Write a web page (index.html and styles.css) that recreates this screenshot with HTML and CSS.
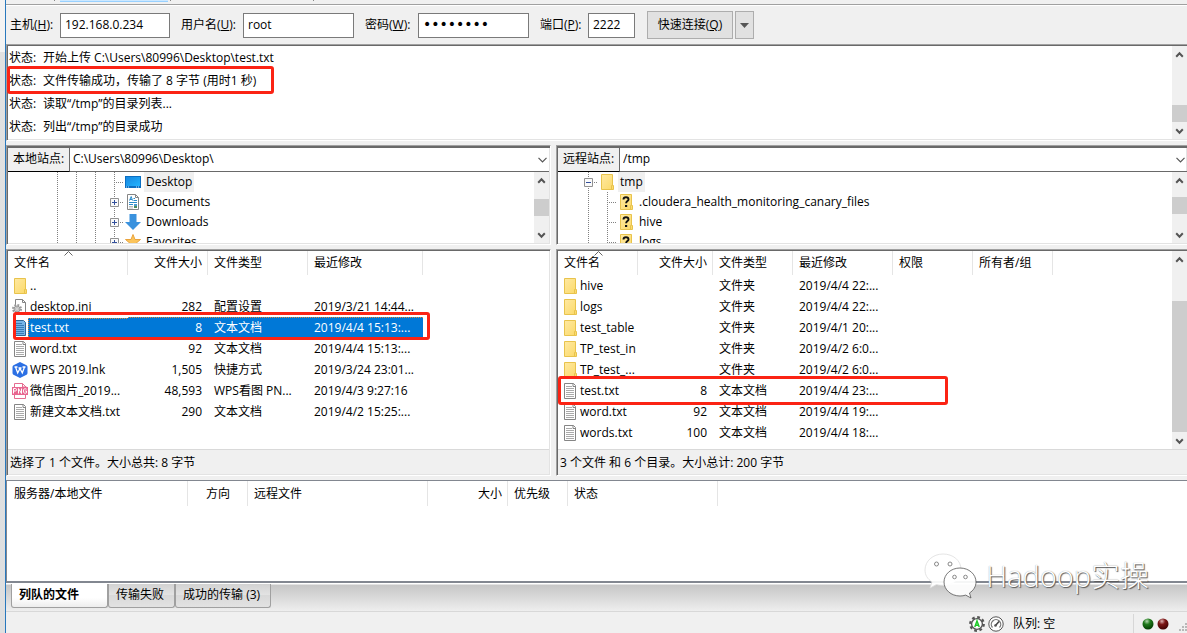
FILE: index.html
```html
<!DOCTYPE html>
<html lang="zh-CN">
<head>
<meta charset="utf-8">
<title>FTP</title>
<link rel="stylesheet" href="styles.css">
</head>
<body>
<svg class="sprite" aria-hidden="true">
  <defs>
    <linearGradient id="gold" x1="0" y1="0" x2="1" y2="1"><stop offset="0" stop-color="#ffe9a2"/><stop offset="1" stop-color="#fbd968"/></linearGradient>
    <linearGradient id="sky" x1="0" y1="0" x2="1" y2="1"><stop offset="0" stop-color="#1887e0"/><stop offset="1" stop-color="#20b4ff"/></linearGradient>
    <radialGradient id="green" cx=".4" cy=".25" r=".75"><stop offset="0" stop-color="#b5d8b0"/><stop offset=".4" stop-color="#1f7a1b"/><stop offset="1" stop-color="#033d02"/></radialGradient>
    <radialGradient id="maroon" cx=".4" cy=".25" r=".75"><stop offset="0" stop-color="#dcb0b0"/><stop offset=".4" stop-color="#7c1616"/><stop offset="1" stop-color="#400202"/></radialGradient>
  </defs>
  <symbol id="folder" viewBox="0 0 16 16"><path d="M2.5.5h11v11h1v4h-12z" fill="url(#gold)" stroke="#e8c34c"/><path d="M12.5 15v-3.500h1" fill="none" stroke="#e8c34c"/></symbol>
  <symbol id="unknown" viewBox="0 0 16 16"><use href="#folder"/><path d="M5.500 5.500C5.500 3.700 6.600 3.300 8 3.300s2.500.8 2.500 2.100c0 1.700-2.400 1.700-2.400 3.900" fill="none" stroke="#111" stroke-width="1.900"/><path d="M7 11h2.200v2H7z" fill="#111"/></symbol>
  <symbol id="text" viewBox="0 0 16 16"><path d="M2.500.5h9l2 2v13h-11z" fill="#fff" stroke="#858585"/><path d="M11 .5v3h3" fill="none" stroke="#858585"/><path d="M4 3.500h6M4 5.500h8M4 7.500h8M4 9.500h8M4 11.500h8M4 13.500h8" stroke="#aaa"/></symbol>
  <symbol id="text-on" viewBox="0 0 16 16"><path d="M2.500.5h9l2 2v13h-11z" fill="#76b5e8" stroke="#2f6593"/><path d="M4 3.500h6M4 5.500h8M4 7.500h8M4 9.500h8M4 11.500h8M4 13.500h8" stroke="#3a7db5"/></symbol>
  <symbol id="ini" viewBox="0 0 16 16"><path d="M3.500.5h7l3 3v12h-10z" fill="#fff" stroke="#858585"/><path d="M10.500.5v3h3" fill="none" stroke="#858585"/><circle cx="5" cy="10" r="3.800" fill="none" stroke="#999" stroke-width="2.400" stroke-dasharray="1.700 1.280"/><circle cx="5" cy="10" r="3" fill="#ccc" stroke="#999"/><circle cx="5" cy="10" r="1.200" fill="#fff" stroke="#999" stroke-width=".6"/></symbol>
  <symbol id="wps" viewBox="0 0 16 16"><path d="M8 0l6.500 3.200Q15.500 4 15.500 5v6q0 1-1 1.800L8 16l-6.500-3.200Q.5 12 .5 11V5q0-1 1-1.800z" fill="#2c70e4"/><path d="M2.500 5h3M3.500 5l2.200 6L8 6.500l2.300 4.500 2.200-6M10.500 5h3M6.500 6h3" fill="none" stroke="#fff" stroke-width="1.300"/></symbol>
  <symbol id="png" viewBox="0 0 16 16"><path d="M2.500 4V.5h8l4 4M2.500 12v3.500h11V12M10.500.5v3.500h4" fill="#fff" stroke="#e56c91"/><path d="M0 4h16v8H0z" fill="#e86690"/><path d="M1.500 10.500v-5h1.800q1.200 0 1.200 1.300T3.300 8H1.500M6.500 10.500v-5l3 5v-5M14.500 6.200q-3-1.500-3 1.800t3 1.800V8h-1.300" fill="none" stroke="#fff"/></symbol>
  <symbol id="desktop" viewBox="0 0 16 16"><path d="M0 2h16v12H0z" fill="#0b6fc2"/><path d="M1 3h14v9H1z" fill="url(#sky)"/><path d="M1 13h1M3 13h1M11 13h1M13 13h1" stroke="#bfe4ff"/></symbol>
  <symbol id="documents" viewBox="0 0 16 16"><path d="M2.500.5h8l3 3v12h-11z" fill="#fff" stroke="#858585"/><path d="M10.500.5v3h3" fill="none" stroke="#858585"/><path d="M4.500 6.500l1.700-4 1.300 4M5 5.500h2M8.500 4.500h1.500M8.500 6.500h3.500M4 8.500h8M4 10.500h4" fill="none" stroke="#2b8bc9"/><path d="M4 12.500h4M4 14h4" stroke="#bbb"/><path d="M9 10h3v2H9z" fill="#4a9bd0"/><path d="M9 12h3v2H9z" fill="#4d8a5c"/></symbol>
  <symbol id="download" viewBox="0 0 16 16"><path d="M4.500 0h7v8H16l-8 8-8-8h4.500z" fill="#3a92de"/></symbol>
  <symbol id="star" viewBox="0 0 16 16"><path d="M8 .5l2 5h5.500l-4.400 3.700 1.700 6L8 11.800l-4.800 3.400 1.700-6L.5 5.500H6z" fill="#fbc45b" stroke="#e9a33c"/></symbol>
  <symbol id="plus" viewBox="0 0 9 9"><path d="M.5.5h8v8h-8z" fill="#fafafa" stroke="#919191"/><path d="M2 4.500h5M4.500 2v5" stroke="#33509c"/></symbol>
  <symbol id="minus" viewBox="0 0 9 9"><path d="M.5.5h8v8h-8z" fill="#fafafa" stroke="#919191"/><path d="M2 4.500h5" stroke="#33509c"/></symbol>
  <symbol id="up" viewBox="0 0 15 17"><path d="M4.200 10.700l3.300-3.400 3.300 3.400" fill="none" stroke="#555" stroke-width="2"/></symbol>
  <symbol id="down" viewBox="0 0 15 17"><path d="M4.200 7.300l3.300 3.400 3.300-3.400" fill="none" stroke="#555" stroke-width="2"/></symbol>
  <symbol id="chevron" viewBox="0 0 9 6"><path d="M.5.8l4 4 4-4" fill="none" stroke="#555" stroke-width="1.200"/></symbol>
  <symbol id="sort" viewBox="0 0 9 5"><path d="M.5 4.500l4-4 4 4" fill="none" stroke="#666"/></symbol>
</svg>

<div class="frame">
  <div class="edge"></div>
  <div class="app">
    <div class="toolbar"><i class="sep"></i><i class="hot"></i><i class="sep"></i><i class="sep far"></i></div>
    <form class="quick">
      <label class="l-host" for="host">主机(<u>H</u>):</label><input id="host" class="host" value="192.168.0.234">
      <label class="l-user" for="user">用户名(<u>U</u>):</label><input id="user" value="root">
      <label class="l-pass" for="pass">密码(<u>W</u>):</label><input id="pass" class="pass" type="password" value="password">
      <label class="l-port" for="port">端口(<u>P</u>):</label><input id="port" class="port" value="2222">
      <button type="button" class="connect">快速连接(<u>Q</u>)</button>
      <button type="button" class="drop" aria-label="历史"><svg width="9" height="5"><path d="M0 0h9L4.500 5z" fill="#555"/></svg></button>
    </form>

    <section class="log sunken">
      <div class="log-lines">
        <p><b>状态:</b>开始上传 C:\Users\80996\Desktop\test.txt</p>
        <p class="marked"><b>状态:</b>文件传输成功，传输了 8 字节 (用时1 秒)<i class="mark mark-log"></i></p>
        <p><b>状态:</b>读取“/tmp”的目录列表...</p>
        <p><b>状态:</b>列出“/tmp”的目录成功</p>
      </div>
      <div class="scroll"><svg><use href="#up"/></svg><div class="track end"><i class="thumb"></i></div><svg><use href="#down"/></svg></div>
    </section>

    <main class="sites">
      <div class="site">
        <section class="sunken nav">
          <div class="address"><label for="local">本地站点:</label><div class="combo"><select id="local"><option>C:\Users\80996\Desktop\</option></select><svg class="chev"><use href="#chevron"/></svg></div></div>
          <div class="treebox">
            <ul class="tree local">
              <li><i class="guide"></i><i class="guide"></i><i class="guide"></i><i class="guide node"></i><svg class="icon"><use href="#desktop"/></svg><span class="current">Desktop</span></li>
              <li><i class="guide"></i><i class="guide"></i><i class="guide"></i><i class="guide node"><svg><use href="#plus"/></svg></i><svg class="icon"><use href="#documents"/></svg><span>Documents</span></li>
              <li><i class="guide"></i><i class="guide"></i><i class="guide"></i><i class="guide node"><svg><use href="#plus"/></svg></i><svg class="icon"><use href="#download"/></svg><span>Downloads</span></li>
              <li><i class="guide"></i><i class="guide"></i><i class="guide"></i><i class="guide node"><svg><use href="#plus"/></svg></i><svg class="icon"><use href="#star"/></svg><span>Favorites</span></li>
            </ul>
            <div class="scroll"><svg><use href="#up"/></svg><div class="track mid"><i class="thumb"></i></div><svg><use href="#down"/></svg></div>
          </div>
        </section>
        <section class="sunken files">
          <div class="listbox">
            <div class="list">
              <table class="t-local">
                <colgroup><col class="w120"><col class="w80"><col class="w100"><col class="w115"></colgroup>
                <thead><tr><th>文件名<svg class="sort"><use href="#sort"/></svg></th><th class="num">文件大小</th><th>文件类型</th><th>最近修改</th></tr></thead>
                <tbody>
                  <tr><td><div class="name"><svg><use href="#folder"/></svg><span>..</span></div></td><td></td><td></td><td></td></tr>
                  <tr><td><div class="name"><svg><use href="#ini"/></svg><span>desktop.ini</span></div></td><td class="num">282</td><td>配置设置</td><td>2019/3/21 14:44...</td></tr>
                  <tr class="marked selected"><td><div class="name"><svg><use href="#text-on"/></svg><span>test.txt</span></div></td><td class="num">8</td><td>文本文档</td><td>2019/4/4 15:13:...<i class="mark mark-local"></i></td></tr>
                  <tr><td><div class="name"><svg><use href="#text"/></svg><span>word.txt</span></div></td><td class="num">92</td><td>文本文档</td><td>2019/4/4 15:13:...</td></tr>
                  <tr><td><div class="name"><svg><use href="#wps"/></svg><span>WPS 2019.lnk</span></div></td><td class="num">1,505</td><td>快捷方式</td><td>2019/3/24 23:01...</td></tr>
                  <tr><td><div class="name"><svg><use href="#png"/></svg><span>微信图片_2019...</span></div></td><td class="num">48,593</td><td>WPS看图 PN...</td><td>2019/4/3 9:27:16</td></tr>
                  <tr><td><div class="name"><svg><use href="#text"/></svg><span>新建文本文档.txt</span></div></td><td class="num">290</td><td>文本文档</td><td>2019/4/2 15:25:...</td></tr>
                </tbody>
              </table>
            </div>
          </div>
          <div class="summary">选择了 1 个文件。大小总共: 8 字节</div>
        </section>
      </div>

      <div class="site remote">
        <section class="sunken nav">
          <div class="address"><label for="remote">远程站点:</label><div class="combo"><select id="remote"><option>/tmp</option></select><svg class="chev"><use href="#chevron"/></svg></div></div>
          <div class="treebox">
            <ul class="tree">
              <li><i class="guide node"><svg><use href="#minus"/></svg></i><svg class="icon"><use href="#folder"/></svg><span class="current">tmp</span></li>
              <li><i class="guide"></i><i class="guide node"></i><svg class="icon"><use href="#unknown"/></svg><span>.cloudera_health_monitoring_canary_files</span></li>
              <li><i class="guide"></i><i class="guide node"></i><svg class="icon"><use href="#unknown"/></svg><span>hive</span></li>
              <li><i class="guide"></i><i class="guide node"></i><svg class="icon"><use href="#unknown"/></svg><span>logs</span></li>
            </ul>
            <div class="scroll"><svg><use href="#up"/></svg><div class="track mid"><i class="thumb"></i></div><svg><use href="#down"/></svg></div>
          </div>
        </section>
        <section class="sunken files">
          <div class="listbox">
            <div class="list">
              <table class="t-remote">
                <colgroup><col class="w80"><col class="w75"><col class="w80"><col class="w100"><col class="w80"><col class="w80"></colgroup>
                <thead><tr><th>文件名<svg class="sort"><use href="#sort"/></svg></th><th class="num">文件大小</th><th>文件类型</th><th>最近修改</th><th>权限</th><th>所有者/组</th></tr></thead>
                <tbody>
                  <tr><td><div class="name"><svg><use href="#folder"/></svg><span>hive</span></div></td><td></td><td>文件夹</td><td>2019/4/4 22:...</td><td></td><td></td></tr>
                  <tr><td><div class="name"><svg><use href="#folder"/></svg><span>logs</span></div></td><td></td><td>文件夹</td><td>2019/4/4 22:...</td><td></td><td></td></tr>
                  <tr><td><div class="name"><svg><use href="#folder"/></svg><span>test_table</span></div></td><td></td><td>文件夹</td><td>2019/4/1 20:...</td><td></td><td></td></tr>
                  <tr><td><div class="name"><svg><use href="#folder"/></svg><span>TP_test_in</span></div></td><td></td><td>文件夹</td><td>2019/4/2 6:0...</td><td></td><td></td></tr>
                  <tr><td><div class="name"><svg><use href="#folder"/></svg><span>TP_test_...</span></div></td><td></td><td>文件夹</td><td>2019/4/2 6:0...</td><td></td><td></td></tr>
                  <tr class="marked"><td><div class="name"><svg><use href="#text"/></svg><span>test.txt</span></div></td><td class="num">8</td><td>文本文档</td><td>2019/4/4 23:...<i class="mark mark-remote"></i></td><td></td><td></td></tr>
                  <tr><td><div class="name"><svg><use href="#text"/></svg><span>word.txt</span></div></td><td class="num">92</td><td>文本文档</td><td>2019/4/4 19:...</td><td></td><td></td></tr>
                  <tr><td><div class="name"><svg><use href="#text"/></svg><span>words.txt</span></div></td><td class="num">100</td><td>文本文档</td><td>2019/4/4 18:...</td><td></td><td></td></tr>
                </tbody>
              </table>
            </div>
            <div class="scroll"><svg><use href="#up"/></svg><div class="track end"><i class="thumb long"></i></div><svg><use href="#down"/></svg></div>
          </div>
          <div class="summary">3 个文件 和 6 个目录。大小总计: 200 字节</div>
        </section>
      </div>
    </main>

    <section class="queue">
      <table class="t-queue">
        <colgroup><col class="w180"><col class="w60"><col class="w180"><col class="w80"><col class="w60"><col class="w150"></colgroup>
        <thead><tr><th>服务器/本地文件</th><th class="mid">方向</th><th>远程文件</th><th class="num">大小</th><th>优先级</th><th>状态</th></tr></thead>
      </table>
    </section>
    <nav class="tabs">
      <button type="button" class="active">列队的文件</button><button type="button">传输失败</button><button type="button">成功的传输 (3)</button>
    </nav>
    <footer class="status">
      <svg width="16" height="16" viewBox="0 0 16 16"><circle cx="8" cy="8" r="6.700" fill="none" stroke="#555" stroke-width="2.400" stroke-dasharray="2.700 2.562"/><circle cx="8" cy="8" r="5.400" fill="#fff" stroke="#555" stroke-width="1.400"/><path d="M5.800 11L8 5l2.200 6M6.500 9.300h3" fill="none" stroke="#1ec828" stroke-width="1.500"/></svg>
      <svg class="gauge" width="16" height="16" viewBox="0 0 16 16"><circle cx="8" cy="8" r="7.200" fill="#fff" stroke="#555"/><path d="M4.500 11.500A4.700 4.700 0 1 1 11.500 11.500" fill="none" stroke="#777" stroke-width="1.300"/><path d="M7.500 9.500l3.500-4" stroke="#444" stroke-width="1.500"/><circle cx="7.500" cy="9.500" r="1.300" fill="#555"/></svg>
      <span class="queued">队列: 空</span>
      <div class="leds">
        <svg width="12" height="12" viewBox="0 0 12 12"><circle cx="6" cy="6" r="5.500" fill="url(#green)"/></svg>
        <svg width="12" height="12" viewBox="0 0 12 12"><circle cx="6" cy="6" r="5.500" fill="url(#maroon)"/></svg>
      </div>
      <svg class="grip" width="8" height="11" viewBox="0 0 8 11"><path d="M6 1h2v2H6zM3 4h2v2H3zM6 4h2v2H6zM0 7h2v2H0zM3 7h2v2H3zM6 7h2v2H6z" fill="#b8b8b8"/></svg>
    </footer>
    <div class="watermark">
      <svg width="54" height="46" viewBox="0 0 54 46"><g fill="#fff" fill-opacity=".92" stroke-width=".8"><path d="M19 1C9 1 1 8 1 17c0 5 2.500 9 7 12l-2 6 6.500-3.500c2 .6 4 .9 6.500.9 10 0 18-7 18-16S29 1 19 1z" stroke="#ddd"/><path d="M36 15c-9 0-16 6.300-16 14s7 14 16 14c2 0 4-.3 5.700-.9L47 45l-1.500-5c4-2.600 6.500-6.500 6.500-11 0-7.700-7-14-16-14z" stroke="#555"/></g><g fill="#fff" stroke="#888"><circle cx="12.500" cy="11" r="2"/><circle cx="26" cy="11" r="2"/><circle cx="30.500" cy="24" r="1.800"/><circle cx="41.500" cy="24" r="1.800"/></g></svg>
      <span>Hadoop实操</span>
    </div>
  </div>
</div>
</body>
</html>
```
FILE: styles.css
```css
* { box-sizing: border-box; }
body {
  margin: 0;
  background: #f0f0f0;
  color: #000;
  font: 12px/20px "Open Sans", "Noto Sans CJK SC", sans-serif;
}
input, select, button { font: inherit; color: inherit; border-radius: 0; }
p, ul { margin: 0; padding: 0; list-style: none; }
i, b { font-style: normal; font-weight: 400; }
svg { display: block; flex: none; }
.sprite { position: absolute; width: 0; height: 0; }

.frame { display: flex; min-height: 100vh; overflow: hidden; }
.edge { flex: none; width: 6px; border-right: 1px solid #2878bd; background: linear-gradient(#f3f3f3 52px, #e1e1e1 52px, #dedfe0); }
.app { position: relative; flex: 1; min-width: 0; display: flex; flex-direction: column; }

.toolbar { display: flex; height: 6px; padding-left: 48px; border-bottom: 1px solid #fff; box-shadow: inset 0 -1px #a0a0a0; }
.sep { width: 1px; height: 1px; background: #888; }
.sep.far { margin-left: 142px; }
.hot { width: 108px; height: 2px; margin: 0 2px 0 5px; background: #cce8ff; border-bottom: 1px solid #99d1ff; }

.quick { display: flex; align-items: center; height: 38px; padding: 0 4px; }
.quick label { flex: none; }
.quick input { width: 111px; height: 25px; margin-right: 11px; padding: 0 4px 2px; border: 1px solid #7a7a7a; background: #fff; outline: 0; }
.l-host { width: 50px; }
.l-user { width: 62px; }
.l-pass { width: 53px; }
.l-port { width: 48px; }
.quick .host { width: 110px; }
.quick .pass { font: 14px/20px "DejaVu Sans", sans-serif; }
.quick .port { width: 47px; margin-right: 12px; }
.quick button { height: 28px; padding: 0; border: 1px solid #adadad; background: #e1e1e1; }
.quick .connect { width: 86px; }
.quick .drop { display: flex; align-items: center; justify-content: center; width: 19px; margin-left: 2px; }

.sunken { border: 1px solid; border-color: #a0a0a0 #fff #fff #a0a0a0; box-shadow: inset 1px 1px #696969, inset -1px -1px #e3e3e3; padding: 1px; }
.log { display: flex; height: 97px; border-right: 0; padding-right: 0; background: #fff; }
.log-lines { flex: 1; padding-left: 1px; }
.log p { display: flex; height: 23px; align-items: center; white-space: pre; }
.log b { width: 34px; }

.scroll { flex: none; display: flex; flex-direction: column; width: 15px; background: #f0f0f0; }
.scroll svg { width: 15px; height: 17px; }
.track { flex: 1; display: flex; flex-direction: column; }
.track.end { justify-content: flex-end; }
.track.mid { justify-content: center; }
.remote .track.mid { padding-bottom: 4px; }
.thumb { height: 17px; background: #cdcdcd; }
.thumb.long { height: 80%; }

.sites { flex: 1; display: grid; grid-template-columns: 545fr 631fr; gap: 5px; padding-top: 4px; }
.site { display: flex; flex-direction: column; gap: 4px; min-width: 0; }
.remote .sunken { border-right: 0; padding-right: 0; }
.nav { padding-top: 2px; box-shadow: inset 1px 2px #696969, inset -1px -1px #e3e3e3; background: #fff; }
.address { display: flex; height: 24px; }
.address label { flex: none; width: 62px; padding-left: 5px; background: #f0f0f0; border-right: 1px solid #696969; border-bottom: 1px solid #000; line-height: 22px; }
.combo { flex: 1; display: flex; align-items: center; border-bottom: 1px solid #696969; padding-right: 2px; }
.combo select { flex: 1; min-width: 0; height: 22px; padding: 0 3px 1px; border: 0; background: transparent; appearance: none; outline: 0; }
.chev { width: 9px; height: 6px; }

.treebox { display: flex; height: 71px; }
.tree { flex: 1; overflow: hidden; padding-left: 21px; }
.tree.local { padding-left: 40px; }
.tree li { display: flex; align-items: center; height: 20px; }
.guide { display: flex; align-items: center; justify-content: center; width: 19px; height: 20px; background: repeating-linear-gradient(#808080 0 1px, transparent 1px 2px) 9px 0 / 1px 20px no-repeat; }
.node { background: repeating-linear-gradient(#808080 0 1px, transparent 1px 2px) 9px 0 / 1px 20px no-repeat, repeating-linear-gradient(90deg, #808080 0 1px, transparent 1px 2px) 9px 10px / 10px 1px no-repeat; }
.guide svg { width: 9px; height: 9px; }
.tree .icon { width: 16px; height: 16px; margin: 0 3px 0 1px; }
.tree span { padding: 0 2px; white-space: nowrap; }
.tree .current { background: #f0f0f0; }

.files { flex: 1; display: flex; flex-direction: column; }
.listbox { flex: 1; display: flex; min-height: 198px; background: #fff; }
.list { flex: 1; min-width: 0; }
table { table-layout: fixed; border-collapse: collapse; width: 0; }
th, td { height: 21px; padding: 0 0 0 6px; font-weight: 400; text-align: left; white-space: nowrap; line-height: 20px; }
th { height: 24px; background: linear-gradient(#e5e5e5, #e5e5e5) right / 1px 100% no-repeat; }
.num { text-align: right; padding: 0 6px 0 0; }
th.mid { text-align: center; padding: 0; }
.w60 { width: 60px; } .w75 { width: 75px; } .w80 { width: 80px; } .w100 { width: 100px; }
.w115 { width: 115px; } .w120 { width: 120px; } .w150 { width: 150px; } .w180 { width: 180px; }
thead tr { position: relative; }
.sort { position: absolute; top: 0; left: 56px; width: 9px; height: 5px; }
.t-remote .sort { left: 36px; }
td:first-child { padding-left: 4px; }
.name { display: flex; align-items: center; height: 21px; }
.name svg { width: 16px; height: 16px; }
.name span { flex: 1; padding-left: 2px; }
.selected { color: #fff; }
.selected td { background: repeating-linear-gradient(90deg, #e08a38 0 1px, transparent 1px 2px) 0 0 / 100% 1px no-repeat #0078d7; }
.selected td:first-child { background: #fff; }
.selected .name span { background: repeating-linear-gradient(90deg, #e08a38 0 1px, transparent 1px 2px) 0 0 / 100% 1px no-repeat, repeating-linear-gradient(#e08a38 0 1px, transparent 1px 2px) 0 0 / 1px 100% no-repeat #0078d7; }

.marked { position: relative; }
.mark { position: absolute; z-index: 1; border: 3px solid #fb2314; border-radius: 3px; pointer-events: none; }
.mark-log { top: -3px; left: -2px; width: 267px; height: 28px; }
.mark-local { top: -5px; left: 5px; width: 417px; height: 28px; }
.mark-remote { top: -4px; left: 0; width: 390px; height: 29px; }

.summary { height: 25px; padding-left: 2px; border-top: 1px solid #d9d9d9; line-height: 26px; background: #f0f0f0; white-space: nowrap; }

.queue { height: 103px; margin-top: 4px; padding-left: 1px; border: 1px solid #828790; border-width: 1px 0 2px 1px; background: #fff; }
.t-queue th { height: 25px; }
.tabs { display: flex; align-items: flex-start; height: 29px; padding-left: 5px; border-bottom: 1px solid #d8d8d8; background: linear-gradient(#fff 1px, #c6c6c6 2px, #eee); }
.tabs button { height: 24px; margin-top: 1px; padding: 0 10px 2px 7px; border: 1px solid #a0a0a0; border-top: 0; border-radius: 0 0 3px 3px; background: linear-gradient(#d2d2d2, #e4e4e4 50%, #d9d9d9 50%, #e2e2e2); white-space: nowrap; }
.tabs .active { width: 97px; padding: 0 0 2px 7px; text-align: left; font-weight: 700; background: linear-gradient(#fff 60%, #ededed); }

.status { display: flex; align-items: center; height: 21px; padding: 2px 0 0 12px; justify-content: flex-end; }
.gauge { margin: 0 9px 0 3px; }
.queued { width: 120px; }
.leds { display: flex; align-items: center; gap: 3px; width: 46px; height: 19px; padding-left: 8px; border-left: 1px solid #d7d7d7; }
.grip { align-self: flex-end; }

.watermark { position: absolute; right: 38px; bottom: 34px; display: flex; align-items: center; gap: 8px; color: #fff; font-size: 29px; font-weight: 300; line-height: 46px; text-shadow: 1px 1px 1px #555, 0 0 1px #999; pointer-events: none; }
```
